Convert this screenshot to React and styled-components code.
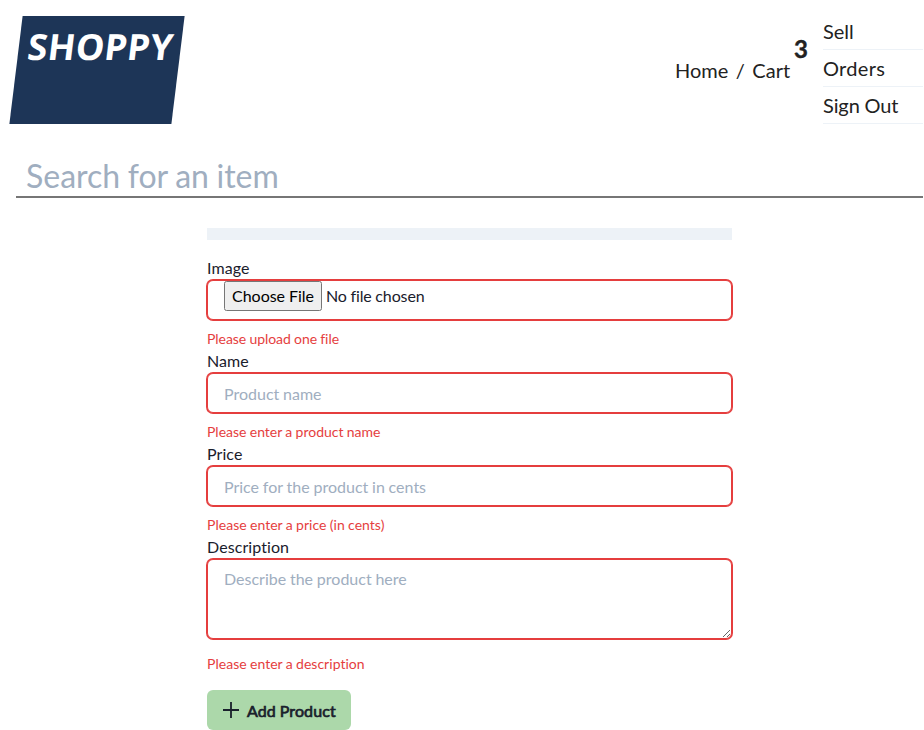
import React from "react";
import styled, { createGlobalStyle } from "styled-components";

const Global = createGlobalStyle`
  *, *::before, *::after { box-sizing: border-box; }
  html, body { margin: 0; height: 730px; overflow: hidden; background: #fff; }
  body { font-family: Lato, sans-serif; font-size: 16px; line-height: 24px; color: #1a202c; font-variant-ligatures: none; word-spacing: -0.3px; }
  input, textarea, button { font-family: inherit; color: inherit; word-spacing: inherit; font-variant-ligatures: inherit; }
`;
const Page = styled.div`width: 923px; height: 730px; overflow: hidden;`;
const Header = styled.header`display: flex; justify-content: space-between; height: 140px; padding-top: 16px;`;
const Logo = styled.div`
  width: 162px; height: 108px; margin-left: 16px; padding: 11px 0 0 9px; color: #fff; background: #1d3557;
  font: 700 36px/40px "Noto Sans", sans-serif; letter-spacing: 0.4px; white-space: nowrap; transform: skewX(-7deg);
`;
const Nav = styled.nav`display: flex; font-size: 20px; line-height: 30px; width: 248px; color: #222;`;
const Crumbs = styled.div`display: flex; gap: 7.5px; margin-top: 39px; width: 119px; white-space: nowrap;`;
const Count = styled.span`font: 700 24px/36px Lato, sans-serif; -webkit-text-stroke: 0.4px currentColor; margin-top: 15px; width: 29px;`;
const Menu = styled.div`width: 100px; margin-top: -3px;`;
const MenuItem = styled.div`height: 37px; padding-top: 3px; border-bottom: 1px solid #edf2f7; letter-spacing: ${p => p.$spacing || 0}px;`;
const Search = styled.input`
  display: block; width: 908px; height: 58px; margin: 0 0 0 16px; padding: 14px 10px 0; border: 0; border-bottom: 2px solid #767676;
  font-size: 32px; word-spacing: -0.6px; outline: 0; &::placeholder { color: #a0aec0; opacity: 1; }
`;
const Form = styled.form`width: 525px; margin: 30px 0 0 207px;`;
const Progress = styled.div`height: 12px; margin-bottom: 16px; background: #edf2f7;`;
const Field = styled.div`height: ${p => p.$tall ? 134 : 93}px;`;
const Label = styled.label`display: block; letter-spacing: 0.08px;`;
const Input = styled.input`
  display: block; width: 100%; height: 40px; padding: 0 16px; border: 1px solid #e53e3e; border-radius: 6px;
  box-shadow: 0 0 0 1px #e53e3e; font-size: 16px; background: #fff; outline: 0;
  &::placeholder { color: #a0aec0; opacity: 1; }
`;
const FileInput = styled(Input)`
  font-variant-ligatures: normal; letter-spacing: -0.12px;
  &::file-selector-button { height: 30px; width: 98px; padding: 0 6px 2px; font: inherit; font-size: 16px; letter-spacing: -0.04px; font-variant-ligatures: none; }
`;
const Area = styled(Input)`height: 80px; padding: 8px 16px; line-height: 22px; resize: vertical;`;
const ErrorText = styled.div`margin-top: ${p => p.$low ? 14 : 8}px; font-size: 14px; line-height: 21px; color: #e53e3e; letter-spacing: ${p => p.$spacing || 0}px;`;
const Submit = styled.button`
  display: flex; align-items: center; gap: 8px; width: 144px; height: 40px; margin-top: 21px; padding: 1px 16px 0; border: 0; border-radius: 6px;
  background: #acd8aa; font-size: 16px; font-weight: 400; -webkit-text-stroke: 0.7px currentColor; letter-spacing: 0.1px; white-space: nowrap;
  svg { flex: none; margin-top: -1px; }
`;

export default function App() {
  return <Page><Global />
    <Header><Logo>SHOPPY</Logo><Nav>
      <Crumbs><span>Home</span><span>/</span><span>Cart</span></Crumbs><Count>3</Count>
      <Menu><MenuItem>Sell</MenuItem><MenuItem $spacing={0.3}>Orders</MenuItem><MenuItem $spacing={-0.1}>Sign Out</MenuItem></Menu>
    </Nav></Header>
    <Search placeholder="Search for an item" />
    <Form><Progress />
      <Field><Label>Image</Label><FileInput type="file" /><ErrorText $spacing={-0.05}>Please upload one file</ErrorText></Field>
      <Field><Label>Name</Label><Input placeholder="Product name" /><ErrorText>Please enter a product name</ErrorText></Field>
      <Field><Label>Price</Label><Input placeholder="Price for the product in cents" /><ErrorText $spacing={0.03}>Please enter a price (in cents)</ErrorText></Field>
      <Field $tall><Label>Description</Label><Area as="textarea" placeholder="Describe the product here" /><ErrorText $low $spacing={0.03}>Please enter a description</ErrorText></Field>
      <Submit type="button"><svg width="16" height="16" viewBox="0 0 16 16" stroke="currentColor" strokeWidth="1.8"><path d="M8 0V16M0 8H16" /></svg>Add Product</Submit>
    </Form>
  </Page>;
}
